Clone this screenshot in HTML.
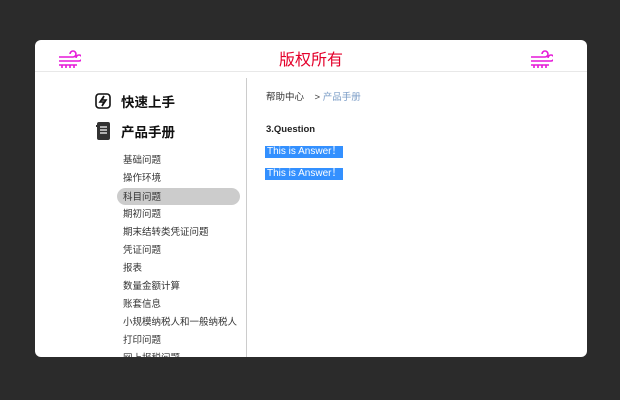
<!DOCTYPE html>
<html><head><meta charset="utf-8"><style>
body{margin:0;width:620px;height:400px;background:#2b2b2b;font-family:"Liberation Sans","Noto Sans CJK SC",sans-serif;position:relative;overflow:hidden}
.card{position:absolute;left:35px;top:40px;width:552px;height:317px;background:#fff;border-radius:6px;overflow:hidden}
.hdr{position:absolute;left:0;top:0;width:552px;height:31px;border-bottom:1px solid #e8e8e8}
.title{position:absolute;left:0;right:0;top:6px;text-align:center;color:#e4002b;font-size:16px}
.div{position:absolute;left:211px;top:38px;width:1px;height:290px;background:#ccc}
.a{position:absolute;font-size:9.5px;color:#333;white-space:nowrap}
.big{position:absolute;font-size:13.5px;font-weight:bold;color:#111}
.pill{position:absolute;left:82px;top:148px;width:123px;height:17px;background:#ccc;border-radius:9px}
.sel{position:absolute;background:#3390ff;color:#fff;font-size:10px;padding:0 2px;height:12px;line-height:12px}
</style></head><body>
<div class="card">
<div class="hdr"><div class="title">版权所有</div>
<svg style="position:absolute;left:23px;top:9px" width="23" height="20" viewBox="0 0 23 20" fill="none" stroke="#e619d8" stroke-width="1.6"><path d="M1 8h14a3 3 0 1 0-3-3"/><path d="M1 12h20a3 3 0 1 0-3-3"/><path d="M1 16h18M4 16v3M8 16v3M12 16v3M16 16v3"/></svg>
<svg style="position:absolute;left:495px;top:9px" width="23" height="20" viewBox="0 0 23 20" fill="none" stroke="#e619d8" stroke-width="1.6"><path d="M1 8h14a3 3 0 1 0-3-3"/><path d="M1 12h20a3 3 0 1 0-3-3"/><path d="M1 16h18M4 16v3M8 16v3M12 16v3M16 16v3"/></svg>
</div>
<div class="div"></div>
<svg style="position:absolute;left:60px;top:53px" width="16" height="16" viewBox="0 0 16 16" fill="none" stroke="#111" stroke-width="1.6"><rect x="1" y="1" width="14" height="14" rx="3"/><path d="M9 3L5 9h4l-2 4 4-6H7z"/></svg>
<div class="big" style="left:86px;top:51px">快速上手</div>
<svg style="position:absolute;left:61px;top:82px" width="14" height="18" viewBox="0 0 14 18"><rect x="1" y="0" width="13" height="18" rx="2" fill="#333"/><rect x="0" y="3" width="3" height="2" fill="#333"/><path d="M4 5h7M4 8h7M4 11h7" stroke="#fff" stroke-width="1.2"/></svg>
<div class="big" style="left:86px;top:81px">产品手册</div>
<div class="pill"></div>
<div class="a" style="left:88px;top:112px">基础问题</div>
<div class="a" style="left:88px;top:130px">操作环境</div>
<div class="a" style="left:88px;top:149px">科目问题</div>
<div class="a" style="left:88px;top:166px">期初问题</div>
<div class="a" style="left:88px;top:184px">期末结转类凭证问题</div>
<div class="a" style="left:88px;top:202px">凭证问题</div>
<div class="a" style="left:88px;top:220px">报表</div>
<div class="a" style="left:88px;top:238px">数量金额计算</div>
<div class="a" style="left:88px;top:256px">账套信息</div>
<div class="a" style="left:88px;top:274px">小规模纳税人和一般纳税人</div>
<div class="a" style="left:88px;top:292px">打印问题</div>
<div class="a" style="left:88px;top:310px">网上报税问题</div>
<div class="a" style="left:231px;top:49px">帮助中心 &nbsp;&nbsp; &gt; <span style="color:#7a9cc6">产品手册</span></div>
<div class="a" style="left:231px;top:84px;font-weight:bold;color:#222">3.Question</div>
<div class="sel" style="left:230px;top:106px">This is Answer！</div>
<div class="sel" style="left:230px;top:128px">This is Answer！</div>
</div>
</body></html>
